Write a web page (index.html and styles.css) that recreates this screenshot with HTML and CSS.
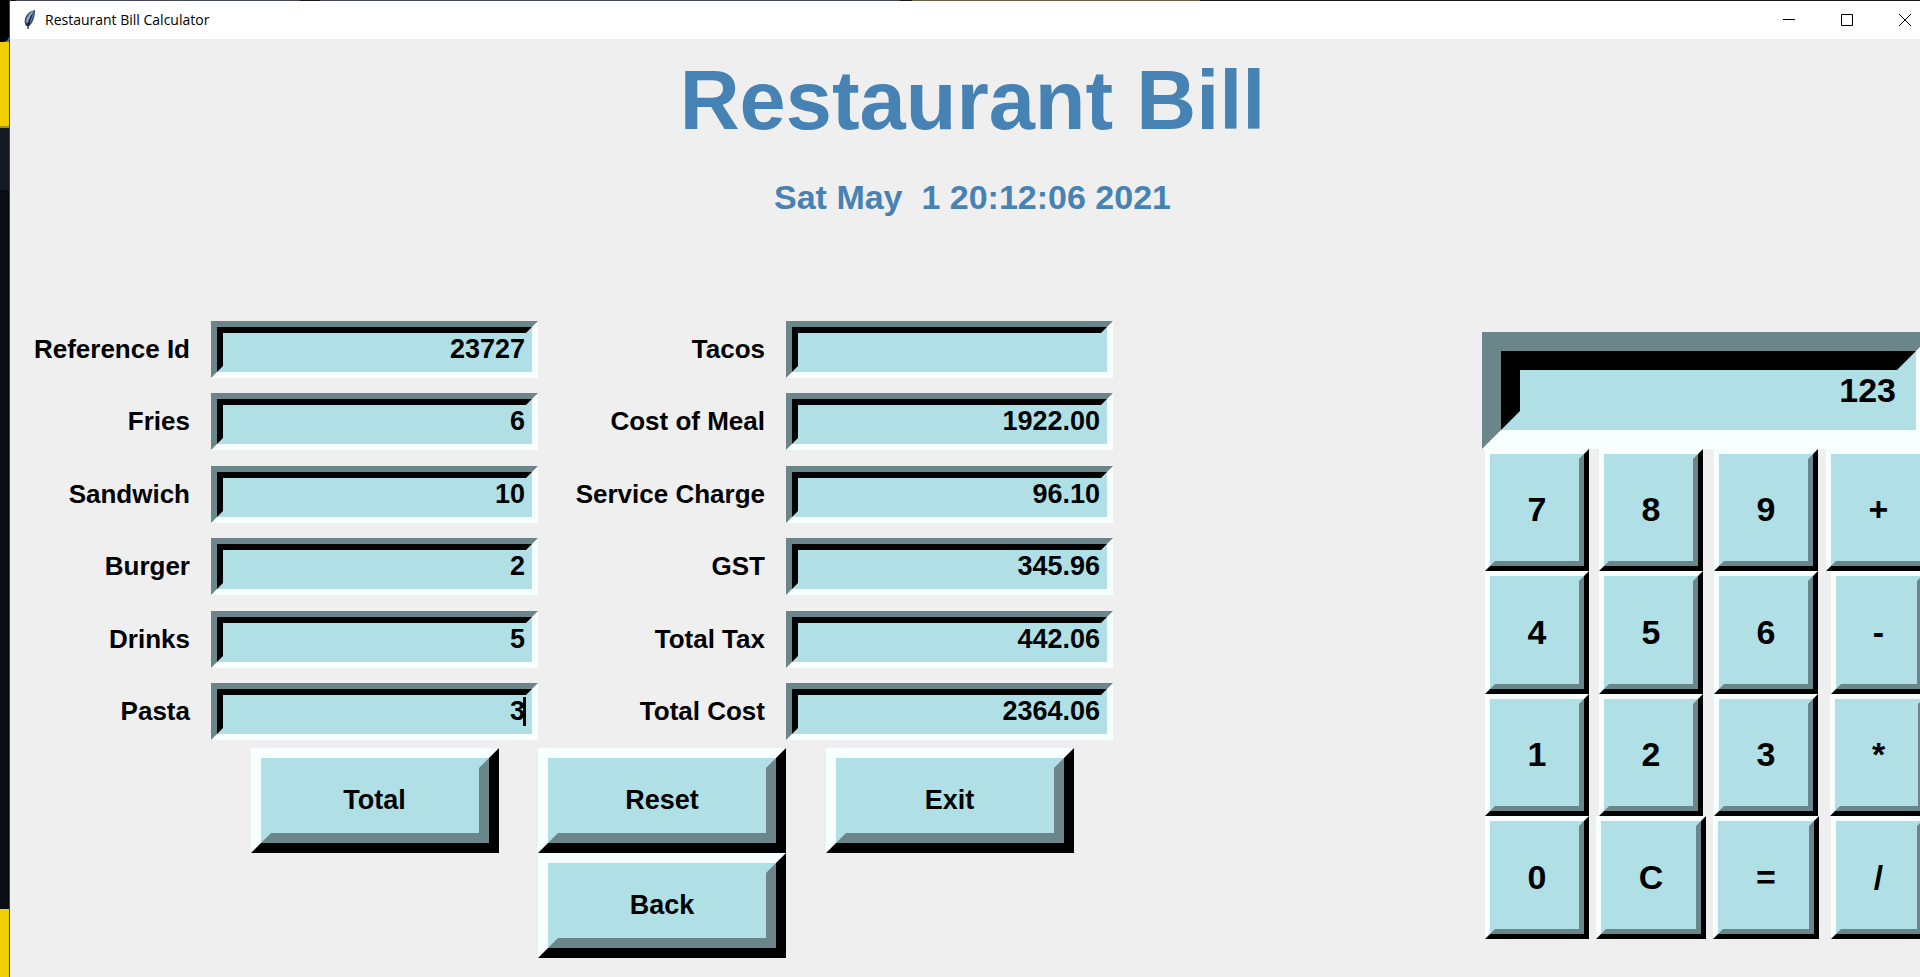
FILE: index.html
```
<!DOCTYPE html>
<html lang="en">
<head>
<meta charset="utf-8">
<title>Restaurant Bill Calculator</title>
<link rel="stylesheet" href="styles.css">
</head>
<body>
<div class="desktop">
  <div class="backdrop">
    <div class="corner"><div class="tab"></div></div>
    <div class="gold"></div>
    <div class="dusk"></div>
    <div class="night"></div>
    <div class="gold gold-low"></div>
  </div>
  <div class="window">
    <header class="titlebar">
      <svg class="feather" viewBox="0 0 12 20" aria-hidden="true">
        <path d="M11 0C6 1 2 4 1 9c-1 3 0 5 1 7h3c4-3 6-9 6-16z" fill="#35496b"/>
        <path d="M10 1C6 2 3 6 2 11l1 3c2-5 4-9 7-13z" fill="#86a9d0"/>
        <path d="M10 3C9 8 7 12 5 14c0-4 2-8 5-11z" fill="#5f86b5"/>
        <path d="M8 5C6 9 4 13 4 19M3 13l1 3M6 13l-2 3" stroke="#1b1c26" stroke-width="1.2" fill="none"/>
      </svg>
      <span class="caption">Restaurant Bill Calculator</span>
      <button class="win-btn" type="button" aria-label="Minimize"><svg viewBox="0 0 12 12"><path d="M0 5.5h12"/></svg></button>
      <button class="win-btn" type="button" aria-label="Maximize"><svg viewBox="0 0 12 12"><path d="M.5.5h11v11H.5z"/></svg></button>
      <button class="win-btn" type="button" aria-label="Close"><svg viewBox="0 0 12 12"><path d="M0 0l12 12M12 0L0 12"/></svg></button>
    </header>
    <div class="heading">
      <h1>Restaurant Bill</h1>
      <p class="stamp">Sat May  1 20:12:06 2021</p>
    </div>
    <main class="main">
      <form class="bill">
        <label for="ref">Reference Id</label><span class="field"><input id="ref" type="text" value="23727"></span>
        <label for="tacos">Tacos</label><span class="field"><input id="tacos" type="text" value=""></span>
        <label for="fries">Fries</label><span class="field"><input id="fries" type="text" value="6"></span>
        <label for="meal">Cost of Meal</label><span class="field"><input id="meal" type="text" value="1922.00"></span>
        <label for="sandwich">Sandwich</label><span class="field"><input id="sandwich" type="text" value="10"></span>
        <label for="service">Service Charge</label><span class="field"><input id="service" type="text" value="96.10"></span>
        <label for="burger">Burger</label><span class="field"><input id="burger" type="text" value="2"></span>
        <label for="gst">GST</label><span class="field"><input id="gst" type="text" value="345.96"></span>
        <label for="drinks">Drinks</label><span class="field"><input id="drinks" type="text" value="5"></span>
        <label for="tax">Total Tax</label><span class="field"><input id="tax" type="text" value="442.06"></span>
        <label for="pasta">Pasta</label><span class="field"><input id="pasta" type="text" value="3"><i class="caret"></i></span>
        <label for="cost">Total Cost</label><span class="field"><input id="cost" type="text" value="2364.06"></span>
        <button class="raised action total" type="button">Total</button>
        <button class="raised action reset" type="button">Reset</button>
        <button class="raised action exit" type="button">Exit</button>
        <button class="raised action back" type="button">Back</button>
      </form>
      <section class="calc" aria-label="Calculator">
        <span class="field display"><input type="text" value="123" aria-label="Calculator display"></span>
        <button class="raised key" type="button">7</button>
        <button class="raised key" type="button">8</button>
        <button class="raised key" type="button">9</button>
        <button class="raised key plus" type="button">+</button>
        <button class="raised key" type="button">4</button>
        <button class="raised key" type="button">5</button>
        <button class="raised key" type="button">6</button>
        <button class="raised key narrow" type="button">-</button>
        <button class="raised key" type="button">1</button>
        <button class="raised key" type="button">2</button>
        <button class="raised key" type="button">3</button>
        <button class="raised key star" type="button">*</button>
        <button class="raised key" type="button">0</button>
        <button class="raised key clear" type="button">C</button>
        <button class="raised key plus" type="button">=</button>
        <button class="raised key narrow" type="button">/</button>
      </section>
    </main>
  </div>
</div>
</body>
</html>
```
FILE: styles.css
```
:root {
  --face: #b0e0e6;
  --light: #f7ffff;
  --shade: #6a868a;
  --panel: #efefef;
  --blue: #4682b4;
}

* { box-sizing: border-box; }

body {
  margin: 0;
  overflow: hidden;
  font-family: "Liberation Sans", Arial, sans-serif;
  font-weight: bold;
  color: #000;
}

.desktop {
  display: flex;
  min-height: 100vh;
  background: linear-gradient(90deg, #14141c 16px, #43455a 16px 300px, #14141c 300px 320px, #43455a 320px 900px, #14141c 900px 912px, #6b6040 912px 1200px, #14141c 1200px);
}

.backdrop { display: flex; flex-direction: column; flex: 0 0 10px; border-right: 1px solid #4a4420; }
.corner { background: #4a78c0; }
.tab { height: 42px; border-bottom-right-radius: 6px; background: #000; }
.gold { height: 86px; background: #f0cf00; border-bottom: 2px solid #a89210; }
.dusk { height: 62px; background: #151922; }
.night { flex: 1; background: #0b0d15; }
.gold-low { height: 68px; border-bottom: 0; }

/* The window runs past the right edge of the screen. */
.window { flex: 1 0 auto; width: calc(100% + 5px); margin: 1px -15px 0 0; background: var(--panel); }

.titlebar {
  display: flex;
  align-items: center;
  height: 38px;
  padding: 0 1px 0 14px;
  background: #fff;
}
.feather { width: 12px; height: 20px; margin-right: 9px; }
.caption { flex: 1; padding-bottom: 2px; font: 14px "Open Sans", "Noto Sans", sans-serif; }
.win-btn {
  width: 58px;
  height: 38px;
  padding: 0;
  border: 0;
  background: none;
}
.win-btn svg { display: block; width: 12px; height: 12px; margin: auto; fill: none; stroke: #000; }

.heading { padding-top: 14px; text-align: center; color: var(--blue); }
h1 { margin: 0; font-size: 83px; line-height: 96px; }
.stamp { margin: 28px 0 0; font-size: 34px; line-height: 40px; white-space: pre; }

.main {
  display: flex;
  justify-content: space-between;
  align-items: center;
  padding-top: 96px;
}

.bill {
  display: grid;
  grid-template-columns: 201px 327px 248px 327px;
  grid-template-rows: repeat(3, 72px 73px) repeat(2, 105px);
  align-items: center;
  justify-items: center;
  font-size: 27px;
}
.bill label { justify-self: end; padding-right: 21px; font-size: 26px; }

.field {
  position: relative;
  display: block;
  width: 100%;
  height: 57px;
  border: 6px solid;
  border-color: var(--shade) var(--light) var(--light) var(--shade);
  background: var(--face);
}
.field input {
  display: block;
  width: 100%;
  height: 100%;
  padding: 0 1px;
  border: 6px solid;
  border-color: #000 var(--face) var(--face) #000;
  border-radius: 0;
  outline: 0;
  background: var(--face);
  color: #000;
  font: inherit;
  text-align: right;
}
.caret { position: absolute; top: 8px; right: 6px; width: 3px; height: 29px; background: #000; }

.raised {
  position: relative;
  padding: 0;
  border: 10px solid;
  border-color: var(--light) #000 #000 var(--light);
  border-radius: 0;
  background: var(--face);
  color: #000;
  font: inherit;
}
.raised::before {
  content: "";
  position: absolute;
  inset: 0;
  border: 10px solid;
  border-color: transparent var(--shade) var(--shade) transparent;
}
.action { width: 248px; height: 105px; }
.total { grid-column: 2; }
.reset { grid-column: 3; }
.exit { grid-column: 4; }
.back { grid-column: 3; }

.calc {
  display: grid;
  grid-template-columns: 110px 118px 112px 113px;
  grid-template-rows: 117px repeat(2, 122px 123px);
  justify-items: center;
  padding-bottom: 1px;
  font-size: 34px;
}
.display { grid-column: 1 / -1; height: 117px; border-width: 19px; }
.display input { border-width: 19px; }
.key { width: 104px; height: 100%; border-width: 5px; }
.key::before { border-width: 5px; }
.plus { width: 106px; }
.clear { width: 110px; }
.star { width: 98px; }
.narrow { width: 96px; }
```
